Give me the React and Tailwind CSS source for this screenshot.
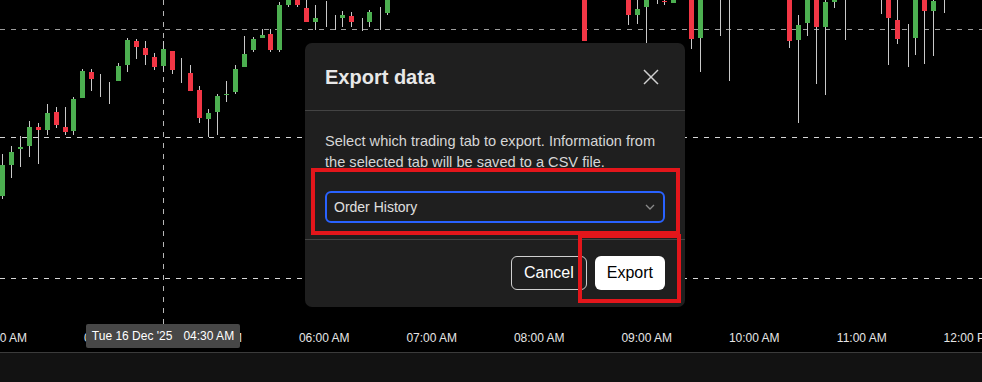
import React from "react";

// candles: [x, bodyTop, bodyBottom, wickTop, wickBottom, kind] — kind g/r, d = doji (wick only)
const CANDLES = [
  [0, 165, 196, 154, 199, "g"],
  [9, 152, 165, 146, 178, "g"],
  [18, 147, 149, 136, 167, "g"],
  [27, 127, 146, 121, 157, "g"],
  [36, 127, 130, 123, 164, "r"],
  [45, 113, 130, 104, 135, "g"],
  [54, 112, 125, 107, 128, "r"],
  [63, 127, 132, 107, 135, "r"],
  [71, 99, 131, 97, 135, "g"],
  [80, 71, 98, 69, 98, "g"],
  [89, 72, 79, 69, 91, "r"],
  [98, 0, 0, 74, 97, "d"],
  [107, 0, 0, 82, 104, "d"],
  [116, 66, 81, 63, 81, "g"],
  [125, 40, 65, 38, 72, "g"],
  [134, 41, 47, 39, 59, "r"],
  [143, 48, 55, 41, 65, "r"],
  [152, 57, 67, 53, 70, "r"],
  [161, 49, 66, 41, 72, "g"],
  [170, 51, 70, 51, 74, "r"],
  [179, 0, 0, 58, 83, "d"],
  [188, 73, 91, 65, 91, "r"],
  [197, 90, 118, 86, 123, "r"],
  [206, 113, 119, 109, 137, "g"],
  [215, 96, 112, 94, 135, "g"],
  [224, 94, 95, 81, 102, "g"],
  [233, 69, 92, 65, 94, "g"],
  [242, 54, 67, 36, 67, "g"],
  [251, 39, 50, 37, 52, "g"],
  [260, 35, 38, 29, 38, "g"],
  [268, 34, 50, 29, 52, "r"],
  [277, 5, 50, 2, 52, "g"],
  [286, 0, 5, 0, 7, "g"],
  [295, 0, 5, 0, 7, "r"],
  [304, 8, 22, 0, 22, "r"],
  [313, 18, 22, 5, 30, "g"],
  [324, 0, 0, 1, 27, "d"],
  [333, 0, 0, 15, 30, "d"],
  [340, 15, 18, 11, 27, "g"],
  [349, 16, 22, 12, 27, "r"],
  [360, 0, 0, 18, 31, "d"],
  [367, 12, 22, 10, 27, "g"],
  [378, 0, 0, 7, 30, "d"],
  [385, 0, 13, 0, 15, "g"],
  [582, 0, 41, 0, 41, "r"],
  [626, 0, 15, 0, 25, "r"],
  [635, 9, 15, 0, 24, "g"],
  [644, 0, 7, 0, 43, "g"],
  [655, 0, 0, 0, 4, "d"],
  [662, 1, 2, 0, 5, "r"],
  [671, 0, 3, 0, 3, "g"],
  [689, 0, 39, 0, 49, "r"],
  [698, 0, 38, 0, 72, "g"],
  [718, 0, 0, 0, 36, "d"],
  [727, 0, 0, 0, 81, "d"],
  [787, 0, 41, 0, 48, "r"],
  [796, 25, 40, 15, 123, "g"],
  [805, 0, 23, 0, 36, "g"],
  [814, 0, 27, 0, 84, "r"],
  [823, 2, 27, 0, 95, "g"],
  [832, 0, 2, 0, 8, "g"],
  [843, 0, 0, 0, 40, "d"],
  [879, 0, 0, 0, 14, "d"],
  [886, 0, 18, 0, 65, "r"],
  [895, 20, 39, 0, 44, "r"],
  [906, 0, 0, 24, 67, "d"],
  [913, 0, 38, 0, 55, "g"],
  [922, 0, 11, 0, 64, "r"],
  [931, 1, 11, 0, 56, "g"],
  [942, 0, 0, 0, 13, "d"],
];

const TIMES = [
  "03:00 AM",
  "04:00 AM",
  "05:00 AM",
  "06:00 AM",
  "07:00 AM",
  "08:00 AM",
  "09:00 AM",
  "10:00 AM",
  "11:00 AM",
  "12:00 PM",
];

function Chart() {
  return (
    <svg width="982" height="324" viewBox="0 0 982 324" className="block">
      {/* grid / crosshair */}
      <line x1="0" y1="29.5" x2="982" y2="29.5" stroke="#9c9c9c" strokeDasharray="5 6" />
      <line x1="0" y1="137.5" x2="982" y2="137.5" stroke="#d6d6d6" strokeDasharray="5 6" />
      <line x1="0" y1="278.5" x2="982" y2="278.5" stroke="#d6d6d6" strokeDasharray="5 6" />
      <line x1="163.5" y1="0" x2="163.5" y2="324" stroke="#b8b8b8" strokeDasharray="5 6" />
      {CANDLES.map(([x, bt, bb, wt, wb, k], i) => (
        <g key={i}>
          <rect x={x + 2} y={wt} width="1" height={Math.max(wb - wt, 1)} fill="#c9c9c9" />
          {k !== "d" && (
            <rect
              x={x}
              y={bt}
              width="5"
              height={Math.max(bb - bt, 1)}
              fill={k === "g" ? "#4caf50" : "#f23645"}
            />
          )}
        </g>
      ))}
    </svg>
  );
}

export default function App() {
  return (
    <div
      className="relative w-[982px] h-[382px] overflow-hidden bg-black text-white"
      style={{ fontFamily: '"Liberation Sans", Arial, sans-serif' }}
    >
      <Chart />

      {/* time axis */}
      <div className="relative h-[28px] flex items-center overflow-hidden">
        <div className="flex -ml-[52px] shrink-0">
          {TIMES.map((t) => (
            <div key={t} className="w-[107.5px] shrink-0 text-center text-[12px] text-[#e6e6e6]">
              {t}
            </div>
          ))}
        </div>
        <div className="absolute left-[86px] top-0 h-[24px] w-[154px] rounded-[2px] bg-[#474747] flex items-center justify-center gap-[11px] text-[12px] text-white">
          <span>Tue 16 Dec '25</span>
          <span>04:30 AM</span>
        </div>
      </div>
      <div className="h-[30px] border-t border-[#3b3b3b] bg-[#121212]" />

      {/* modal */}
      <div className="absolute left-[305px] top-[43px] w-[380px] h-[264px] rounded-[7px] bg-[#1f1f1f] flex flex-col">
        <div className="h-[68px] shrink-0 flex items-center justify-between pl-5 pr-[26px] border-b border-[#434343]">
          <h2 className="text-[20px] font-bold text-[#e8e8e8]">Export data</h2>
          <svg width="16" height="16" viewBox="0 0 16 16" fill="none" stroke="#d0d0d0" strokeWidth="1.5">
            <line x1="1" y1="1" x2="15" y2="15" />
            <line x1="15" y1="1" x2="1" y2="15" />
          </svg>
        </div>
        <div className="px-5 pt-[20px] pb-[16px] border-b border-[#434343]">
          <p className="text-[14.6px] leading-[21px] text-[#d6d6d6]">
            Select which trading tab to export. Information from the selected tab will be saved to a CSV file.
          </p>
          <div className="mt-[18px] h-[32px] rounded-[6px] border-2 border-[#2962ff] flex items-center justify-between pl-[7px] pr-[8px]">
            <span className="text-[14px] text-[#e0e0e0]">Order History</span>
            <svg width="10" height="6" viewBox="0 0 10 6" fill="none" stroke="#8a8a8a" strokeWidth="1.3">
              <polyline points="1,1 5,5 9,1" />
            </svg>
          </div>
        </div>
        <div className="flex-1 flex items-start justify-end gap-2 pt-[16px] pr-5">
          <button className="h-[34px] px-3 rounded-[6px] border border-[#d0d0d0] text-[16px] text-white">
            Cancel
          </button>
          <button className="h-[34px] px-3 rounded-[6px] bg-white text-[16px] text-black">
            Export
          </button>
        </div>
      </div>

      {/* annotation boxes */}
      <div className="absolute left-[311px] top-[168px] w-[369px] h-[67px] border-4 border-[#e3161b]" />
      <div className="absolute left-[578px] top-[234px] w-[103px] h-[69px] border-4 border-[#e3161b]" />
    </div>
  );
}
